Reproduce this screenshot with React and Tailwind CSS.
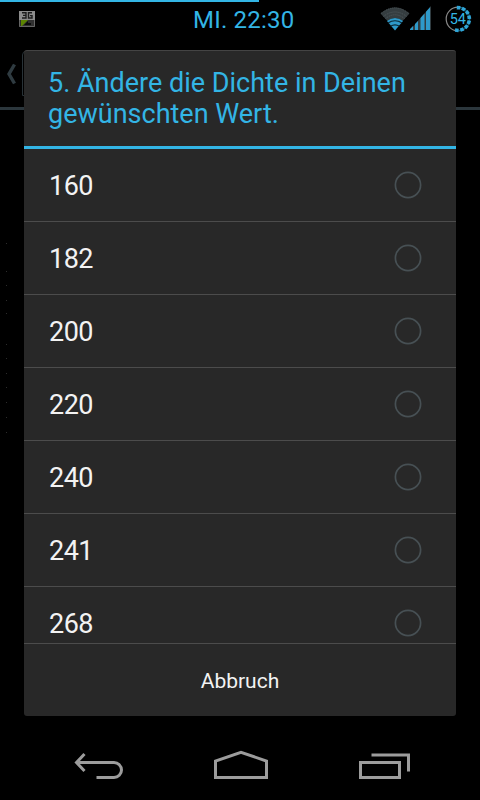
import React, { useState } from 'react';

const DENSITIES = ['160', '182', '200', '220', '240', '241', '268'];

// Faint bullets of the dimmed page, left of the dialog
const BULLETS = [243, 271, 285, 300, 313, 344, 358, 373, 387, 402, 417, 432];

// Blue blocks on the right half of the battery ring, one every 26 degrees
const BATTERY_STEPS = [3, 29, 55, 81, 107, 133, 159, 186];

const MobileDataIcon = () => (
  <svg width="16" height="16" viewBox="0 0 16 16" className="shrink-0">
    <rect width="16" height="9" fill="#8c8c8c" />
    <rect y="9" width="16" height="7" fill="#303030" />
    <path d="M0.500 9v6.500h15V9" fill="none" stroke="#666" />
    <path d="M2 9h7L3 15H2z" fill="#5c8500" />
    <path d="M5 14l4-4v2h3v2z" fill="#0b0b0b" />
    <path d="M3 1.800h4v5.200H3M4 4.400h3M13 1.800H9.500V7H13V4.600h-2" fill="none" stroke="#1c1c1c" strokeWidth="1.400" />
  </svg>
);

const WifiIcon = () => (
  <svg width="30" height="24" viewBox="0 0 30 24">
    <path d="M0.500 6.500Q15-5.500 29.500 6.500L22.500 14Q15 8 7.500 14z" fill="#353d40" />
    <path d="M1 6.400Q15-4.800 29 6.400M3.500 9.400Q15 0.500 26.500 9.400M5.500 11.600Q15 4 24.500 11.600" fill="none" stroke="#515b5f" strokeWidth="1" strokeDasharray="1 1" />
    <path d="M7 14Q15 8 23 14L15 23.500z" fill="#2e9aca" />
    <path d="M8 16Q15 11.500 22 16M10.500 19.300Q15 16.300 19.500 19.300" fill="none" stroke="#0b2733" strokeWidth="1.200" />
  </svg>
);

const SignalIcon = () => (
  <svg width="21" height="24" viewBox="0 0 21 24">
    <path d="M0 24L21 0v24z" fill="#303c41" />
    <path d="M0 24v-1l3-3v4zM5 24v-6l3-3v9zM10.500 24V12l4-4.500V24zM16 24V5.700l4-4.500V24z" fill="#2e9aca" />
  </svg>
);

const BatteryRing = () => (
  <svg width="28" height="28" viewBox="0 0 28 28">
    <path d="M14 2.200a11.800 11.800 0 0 0 0 23.600" fill="none" stroke="#8a8a8a" strokeWidth="1.200" />
    <path d="M14 2.200a11.800 11.800 0 0 1 0 23.600" fill="none" stroke="#176784" strokeWidth="1.200" />
    {BATTERY_STEPS.map((deg) => (
      <rect key={deg} x="12.200" y="0.900" width="3.600" height="3.600" fill="#2fa6d8" transform={`rotate(${deg} 14 14)`} />
    ))}
    <text x="13.800" y="19.200" textAnchor="middle" fontSize="14.500" fill="#33b5e5" fontFamily="Roboto, sans-serif">54</text>
  </svg>
);

const StatusBar = () => (
  <header className="relative h-[38px]">
    <div className="h-0.5 w-[259px] bg-[#33b5e5]" />
    <div className="flex h-9 items-start justify-between pl-[19px] pr-2">
      <div className="pt-[9px]">
        <MobileDataIcon />
      </div>
      <div className="flex">
        <div className="flex pt-1">
          <div className="pt-px"><WifiIcon /></div>
          <SignalIcon />
        </div>
        <div className="ml-[13px] mt-[3px]"><BatteryRing /></div>
      </div>
    </div>
    <span className="absolute left-[193px] top-[6px] whitespace-nowrap text-[24px] leading-7 tracking-[0.2px] text-[#33b5e5]">
      MI. 22:30
    </span>
  </header>
);

// The page behind the dialog, nearly black under the dim layer
const DimmedPage = () => (
  <div className="relative h-[690px]">
    <div className="flex h-[72px] items-start border-b-[3px] border-[#2b363c] pl-[6px] pt-[12px]">
      <svg width="10" height="48" viewBox="0 0 10 48">
        <path d="M8.500 14.500L3 24l5.500 9.500" fill="none" stroke="#2f3b41" strokeWidth="3.400" />
      </svg>
      <div className="ml-1.5 mt-px h-[45px] w-10 rounded-tl border border-[#283237]" />
    </div>
    {BULLETS.map((y) => (
      <span key={y} className="absolute left-[6px] size-px bg-[#2c2c2c]" style={{ top: y - 38 }} />
    ))}
  </div>
);

const DensityRow = ({ value, selected, onSelect }) => (
  <button
    onClick={() => onSelect(value)}
    className="flex h-[73px] w-full shrink-0 items-center justify-between border-b border-[#4c4c4c] pl-[25px] pr-[34px] text-left"
  >
    <span className="pt-px text-[27px] leading-8 tracking-[-0.5px] text-[#f3f3f3]">{value}</span>
    <svg width="28" height="28" viewBox="0 0 28 28">
      <circle cx="14" cy="14" r="12.600" fill="none" stroke="#475054" strokeWidth="1.700" />
      {selected && <circle cx="14" cy="14" r="6" fill="#33b5e5" />}
    </svg>
  </button>
);

const DensityDialog = () => {
  const [selected, setSelected] = useState(null);

  return (
    <div className="absolute left-6 top-[50px] flex h-[666px] w-[432px] flex-col overflow-hidden rounded-[3px] border-t border-[#444] bg-[#282828]">
      <h1 className="h-[98px] shrink-0 whitespace-nowrap border-b-[3px] border-[#33b5e5] pl-6 pt-[17px] text-[27px] leading-[31px] text-[#33b5e5]">
        5. Ändere die Dichte in Deinen
        <br />
        gewünschten Wert.
      </h1>
      <div className="flex min-h-0 flex-1 flex-col overflow-hidden">
        {DENSITIES.map((value) => (
          <DensityRow key={value} value={value} selected={selected === value} onSelect={setSelected} />
        ))}
      </div>
      <button className="h-[73px] shrink-0 border-t border-[#4c4c4c] pt-[3px] text-[21px] text-[#f3f3f3]">
        Abbruch
      </button>
    </div>
  );
};

const NavBar = () => (
  <nav className="flex h-[72px] items-start justify-between pl-[74px] pr-[69px] pt-[22px]">
    <svg width="50" height="30" viewBox="0 0 50 30" fill="none" stroke="#9c9c9c" strokeWidth="3">
      <path d="M3 12.500H40a7.500 7.500 0 0 1 0 15H22.500" />
      <path d="M10.500 4L2.500 12.500l8 8.500" />
    </svg>
    <svg width="54" height="30" viewBox="0 0 54 30" fill="none" stroke="#9c9c9c" strokeWidth="3">
      <path d="M1.500 27.500V11L27 2.300 52.500 11v16.500z" />
    </svg>
    <svg width="53" height="30" viewBox="0 0 53 30" fill="none" stroke="#9c9c9c" strokeWidth="3">
      <path d="M2.500 12.500h39v15h-39z" />
      <path d="M13.500 5H50.500v16.500" />
    </svg>
  </nav>
);

const App = () => (
  <div className="relative h-[800px] w-[480px] overflow-hidden bg-black font-['Roboto',sans-serif]">
    <StatusBar />
    <DimmedPage />
    <NavBar />
    <DensityDialog />
  </div>
);

export default App;
